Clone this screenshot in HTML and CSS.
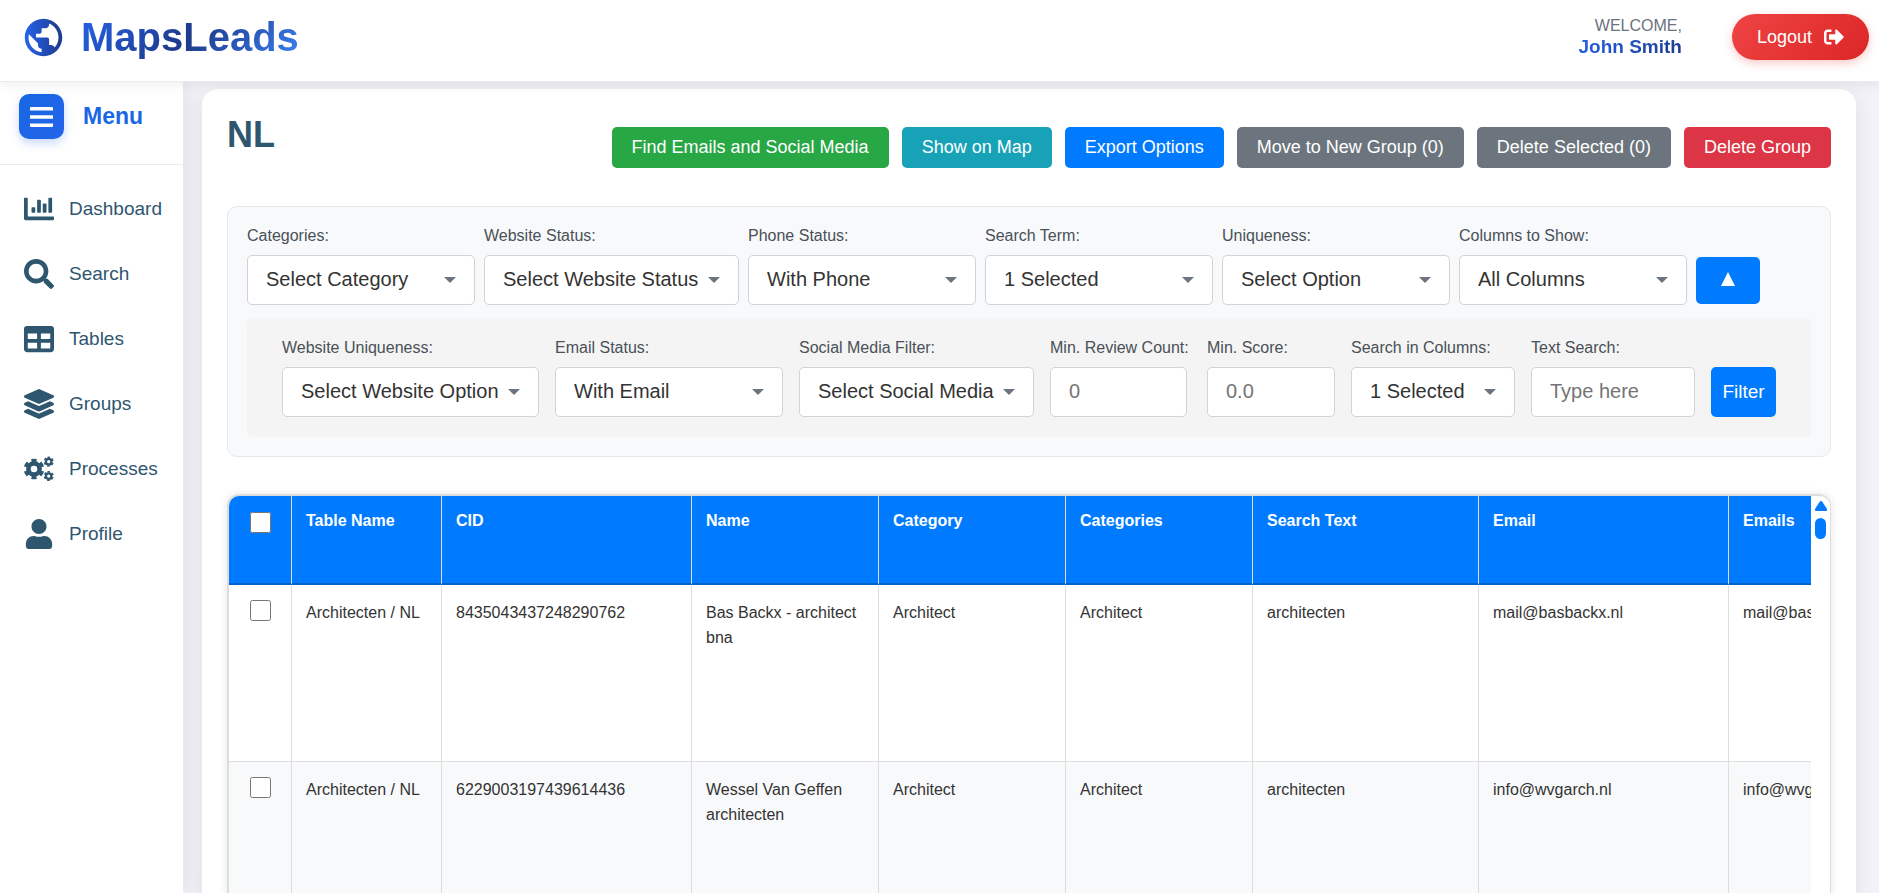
FILE: index.html
```
<!DOCTYPE html>
<html lang="en">
<head>
    <meta charset="UTF-8">
    <meta name="viewport" content="width=device-width, initial-scale=1.0">
    <title>MapsLeads</title>
    <link rel="stylesheet" href="styles.css">
</head>
<body>
    <!-- Top Bar -->
    <header class="topbar">
        <a class="brand" href="#">
            <svg class="brand-icon" viewBox="0 0 24 24" aria-hidden="true">
                <defs>
                    <linearGradient id="brandGradient" x1="0" y1="0" x2="1" y2="0">
                        <stop offset="0" stop-color="#2563eb"/>
                        <stop offset="1" stop-color="#1e3a8a"/>
                    </linearGradient>
                </defs>
                <path fill="url(#brandGradient)" d="M12 2C6.48 2 2 6.48 2 12s4.48 10 10 10 10-4.48 10-10S17.52 2 12 2zm-1 17.93c-3.95-.49-7-3.85-7-7.93 0-.62.08-1.21.21-1.79L9 15v1c0 1.1.9 2 2 2v1.93zm6.9-2.54c-.26-.81-1-1.39-1.9-1.39h-1v-3c0-.55-.45-1-1-1H8v-2h2c.55 0 1-.45 1-1V7h2c1.1 0 2-.9 2-2v-.41c2.93 1.19 5 4.06 5 7.41 0 2.08-.8 3.97-2.1 5.39z"/>
            </svg>
            <span class="brand-name">MapsLeads</span>
        </a>
        <div class="topbar-right">
            <div class="user-info">
                <span class="welcome">WELCOME,</span>
                <span class="user-name">John Smith</span>
            </div>
            <button class="logout-btn" type="button">
                <span>Logout</span>
                <svg viewBox="0 0 512 512" aria-hidden="true"><path d="M497 273L329 441c-15 15-41 4.500-41-17v-96H152c-13.300 0-24-10.700-24-24v-96c0-13.300 10.700-24 24-24h136V88c0-21.400 25.900-32 41-17l168 168c9.300 9.400 9.300 24.600 0 34zM192 436v-40c0-6.600-5.400-12-12-12H96c-17.700 0-32-14.300-32-32V160c0-17.700 14.300-32 32-32h84c6.600 0 12-5.400 12-12V76c0-6.600-5.400-12-12-12H96c-53 0-96 43-96 96v192c0 53 43 96 96 96h84c6.600 0 12-5.400 12-12z"/></svg>
            </button>
        </div>
    </header>

    <div class="layout">
        <!-- Sidebar -->
        <aside class="sidebar">
            <div class="menu-header">
                <button class="menu-btn" type="button" aria-label="Toggle menu">
                    <svg viewBox="0 0 23 20" aria-hidden="true"><path d="M1 0h21a1 1 0 0 1 1 1v2.500H0V1a1 1 0 0 1 1-1zM0 8.200h23v3.500H0zM0 16.500h23V19a1 1 0 0 1-1 1H1a1 1 0 0 1-1-1z"/></svg>
                </button>
                <span class="menu-title">Menu</span>
            </div>
            <nav class="menu">
                <a href="#">
                    <svg viewBox="0 0 512 512" aria-hidden="true"><path d="M332.800 320h38.400c6.400 0 12.800-6.400 12.800-12.800V172.800c0-6.400-6.400-12.800-12.800-12.800h-38.400c-6.400 0-12.800 6.400-12.800 12.800v134.400c0 6.400 6.400 12.800 12.800 12.800zm96 0h38.400c6.400 0 12.800-6.400 12.800-12.800V76.800c0-6.400-6.400-12.800-12.800-12.800h-38.400c-6.400 0-12.800 6.400-12.800 12.800v230.400c0 6.400 6.400 12.800 12.800 12.800zm-288 0h38.400c6.400 0 12.800-6.400 12.800-12.800v-70.400c0-6.400-6.400-12.800-12.800-12.800h-38.400c-6.400 0-12.800 6.400-12.800 12.800v70.400c0 6.400 6.400 12.800 12.800 12.800zm96 0h38.400c6.400 0 12.800-6.400 12.800-12.800V108.800c0-6.400-6.400-12.800-12.800-12.800h-38.400c-6.400 0-12.800 6.400-12.800 12.800v198.400c0 6.400 6.400 12.800 12.800 12.800zM496 384H64V80c0-8.840-7.160-16-16-16H16C7.160 64 0 71.160 0 80v336c0 17.670 14.330 32 32 32h464c8.840 0 16-7.160 16-16v-32c0-8.840-7.160-16-16-16z"/></svg>
                    Dashboard
                </a>
                <a href="#">
                    <svg viewBox="0 0 512 512" aria-hidden="true"><path d="M505 442.700L405.300 343c-4.500-4.500-10.600-7-17-7H372c27.600-35.300 44-79.700 44-128C416 93.100 322.900 0 208 0S0 93.100 0 208s93.100 208 208 208c48.300 0 92.700-16.400 128-44v16.300c0 6.400 2.500 12.500 7 17l99.700 99.700c9.400 9.400 24.600 9.400 33.900 0l28.300-28.300c9.400-9.400 9.400-24.600.1-34zM208 336c-70.700 0-128-57.200-128-128 0-70.700 57.200-128 128-128 70.700 0 128 57.200 128 128 0 70.700-57.200 128-128 128z"/></svg>
                    Search
                </a>
                <a href="#">
                    <svg viewBox="0 0 512 512" aria-hidden="true"><path d="M464 32H48C21.490 32 0 53.490 0 80v352c0 26.510 21.490 48 48 48h416c26.510 0 48-21.490 48-48V80c0-26.510-21.490-48-48-48zM224 416H64v-96h160v96zm0-160H64v-96h160v96zm224 160H288v-96h160v96zm0-160H288v-96h160v96z"/></svg>
                    Tables
                </a>
                <a href="#">
                    <svg viewBox="0 0 512 512" aria-hidden="true"><path d="M12.410 148.020l232.940 105.670c6.800 3.090 14.490 3.090 21.290 0l232.940-105.670c16.550-7.510 16.550-32.520 0-40.030L266.650 2.310a25.607 25.607 0 0 0-21.290 0L12.410 107.980c-16.550 7.510-16.550 32.530 0 40.040zm487.180 88.280l-58.090-26.330-161.640 73.270c-7.560 3.430-15.590 5.170-23.860 5.170s-16.290-1.740-23.860-5.170L70.510 209.970l-58.100 26.330c-16.550 7.500-16.550 32.500 0 40l232.940 105.590c6.800 3.080 14.490 3.080 21.290 0L499.590 276.300c16.550-7.500 16.550-32.500 0-40zm0 127.800l-57.870-26.230-161.860 73.370c-7.560 3.430-15.590 5.170-23.860 5.170s-16.290-1.740-23.860-5.170L70.290 337.870 12.410 364.100c-16.550 7.500-16.550 32.500 0 40l232.940 105.590c6.800 3.080 14.490 3.080 21.290 0L499.590 404.100c16.550-7.500 16.550-32.500 0-40z"/></svg>
                    Groups
                </a>
                <a href="#">
                    <svg viewBox="0 0 30 30" aria-hidden="true">
                        <g id="gear" fill="none" stroke="currentColor">
                            <circle cx="10" cy="15" r="5.600" stroke-width="4.600"/>
                            <circle cx="10" cy="15" r="8.700" stroke-width="3.200" pathLength="12" stroke-dasharray="1.100 0.900" transform="rotate(-106.500 10 15)"/>
                        </g>
                        <use href="#gear" transform="translate(19.800 .3) scale(.49)"/>
                        <use href="#gear" transform="translate(19.800 14.700) scale(.49)"/>
                    </svg>
                    Processes
                </a>
                <a href="#">
                    <svg viewBox="0 0 448 512" aria-hidden="true"><path d="M224 256c70.700 0 128-57.300 128-128S294.700 0 224 0 96 57.300 96 128s57.300 128 128 128zm89.600 32h-16.700c-22.200 10.200-46.900 16-72.900 16s-50.600-5.800-72.900-16h-16.700C60.200 288 0 348.200 0 422.400V464c0 26.500 21.500 48 48 48h352c26.500 0 48-21.500 48-48v-41.600c0-74.200-60.200-134.400-134.400-134.400z"/></svg>
                    Profile
                </a>
            </nav>
        </aside>

        <main class="content">
            <div class="card">
                <div class="card-header">
                    <h1>NL</h1>
                    <div class="actions">
                        <button class="btn btn-green" type="button">Find Emails and Social Media</button>
                        <button class="btn btn-teal" type="button">Show on Map</button>
                        <button class="btn btn-blue" type="button">Export Options</button>
                        <button class="btn btn-gray" type="button">Move to New Group (0)</button>
                        <button class="btn btn-gray" type="button">Delete Selected (0)</button>
                        <button class="btn btn-red" type="button">Delete Group</button>
                    </div>
                </div>

                <!-- Filters -->
                <form class="filters">
                    <div class="filter-row">
                        <div class="field">
                            <label for="categories">Categories:</label>
                            <select id="categories"><option>Select Category</option></select>
                        </div>
                        <div class="field">
                            <label for="websiteStatus">Website Status:</label>
                            <select id="websiteStatus"><option>Select Website Status</option></select>
                        </div>
                        <div class="field">
                            <label for="phoneStatus">Phone Status:</label>
                            <select id="phoneStatus"><option>With Phone</option></select>
                        </div>
                        <div class="field">
                            <label for="searchTerm">Search Term:</label>
                            <select id="searchTerm"><option>1 Selected</option></select>
                        </div>
                        <div class="field">
                            <label for="uniqueness">Uniqueness:</label>
                            <select id="uniqueness"><option>Select Option</option></select>
                        </div>
                        <div class="field">
                            <label for="columns">Columns to Show:</label>
                            <select id="columns"><option>All Columns</option></select>
                        </div>
                        <button class="toggle-btn" type="button" aria-label="Hide more filters">
                            <svg viewBox="0 0 14 14" aria-hidden="true"><path d="M7 0l7 14H0z"/></svg>
                        </button>
                    </div>

                    <div class="filter-row more-filters">
                        <div class="field">
                            <label for="websiteUniqueness">Website Uniqueness:</label>
                            <select id="websiteUniqueness"><option>Select Website Option</option></select>
                        </div>
                        <div class="field">
                            <label for="emailStatus">Email Status:</label>
                            <select id="emailStatus"><option>With Email</option></select>
                        </div>
                        <div class="field">
                            <label for="socialMedia">Social Media Filter:</label>
                            <select id="socialMedia"><option>Select Social Media</option></select>
                        </div>
                        <div class="field reviews-field">
                            <label for="minReviews">Min. Review Count:</label>
                            <input class="reviews-input" type="number" id="minReviews" placeholder="0">
                        </div>
                        <div class="field">
                            <label for="minScore">Min. Score:</label>
                            <input class="score-input" type="number" id="minScore" placeholder="0.0">
                        </div>
                        <div class="field">
                            <label for="searchColumns">Search in Columns:</label>
                            <select class="narrow" id="searchColumns"><option>1 Selected</option></select>
                        </div>
                        <div class="field">
                            <label for="textSearch">Text Search:</label>
                            <input class="narrow" type="text" id="textSearch" placeholder="Type here">
                        </div>
                        <button class="filter-btn" type="button">Filter</button>
                    </div>
                </form>

                <!-- Leads Table -->
                <div class="table-box">
                    <div class="table-scroll">
                        <table>
                            <colgroup>
                                <col class="col-check">
                                <col class="col-table">
                                <col class="col-wide">
                                <col class="col-medium">
                                <col class="col-medium">
                                <col class="col-medium">
                                <col class="col-search">
                                <col class="col-wide">
                                <col class="col-wide">
                            </colgroup>
                            <thead>
                                <tr>
                                    <th><input type="checkbox" aria-label="Select all"></th>
                                    <th>Table Name</th>
                                    <th>CID</th>
                                    <th>Name</th>
                                    <th>Category</th>
                                    <th>Categories</th>
                                    <th>Search Text</th>
                                    <th>Email</th>
                                    <th>Emails</th>
                                </tr>
                            </thead>
                            <tbody>
                                <tr>
                                    <td><input type="checkbox" aria-label="Select row"></td>
                                    <td>Architecten / NL</td>
                                    <td>8435043437248290762</td>
                                    <td>Bas Backx - architect bna</td>
                                    <td>Architect</td>
                                    <td>Architect</td>
                                    <td>architecten</td>
                                    <td>mail@basbackx.nl</td>
                                    <td>mail@basbackx.nl</td>
                                </tr>
                                <tr>
                                    <td><input type="checkbox" aria-label="Select row"></td>
                                    <td>Architecten / NL</td>
                                    <td>6229003197439614436</td>
                                    <td>Wessel Van Geffen architecten</td>
                                    <td>Architect</td>
                                    <td>Architect</td>
                                    <td>architecten</td>
                                    <td>info@wvgarch.nl</td>
                                    <td>info@wvgarch.nl</td>
                                </tr>
                            </tbody>
                        </table>
                    </div>
                    <div class="scrollbar" aria-hidden="true">
                        <svg class="scroll-arrow" viewBox="0 0 12 10"><path d="M6 0q.8 0 1.300.8L12 8q.3 2-1 2H1q-1.300 0-1-2L4.700.8Q5.200 0 6 0z"/></svg>
                        <div class="scroll-thumb"></div>
                    </div>
                </div>
            </div>
        </main>
    </div>
</body>
</html>
```

FILE: styles.css
```
* {
    box-sizing: border-box;
}

body {
    margin: 0;
    height: 100vh;
    display: flex;
    flex-direction: column;
    overflow: hidden;
    font-family: "Liberation Sans", Arial, sans-serif;
    font-size: 16px;
    color: #333;
    background-color: #f3f2f8;
}

button, input, select {
    font-family: inherit;
}

button {
    border: none;
    padding: 0;
    color: white;
    cursor: pointer;
}

svg {
    fill: currentColor;
}

/* Top Bar */
.topbar {
    display: flex;
    justify-content: space-between;
    align-items: flex-start;
    flex-shrink: 0;
    height: 82px;
    padding: 14px 10px 0 21px;
    background: #fff;
    border-bottom: 1px solid #ececf0;
    box-shadow: 0 2px 12px rgba(0, 0, 0, 0.08);
    z-index: 2;
}

.brand {
    display: flex;
    align-items: center;
    gap: 15px;
    text-decoration: none;
}

.brand-icon {
    width: 45px;
    height: 45px;
}

.brand-name {
    font-size: 40px;
    line-height: 46px;
    font-weight: bold;
    color: transparent;
    background: linear-gradient(135deg, #2563eb, #1e3a8a 50%, #3b82f6);
    background-clip: text;
}

.topbar-right {
    display: flex;
    gap: 50px;
}

.user-info {
    display: flex;
    flex-direction: column;
    align-items: flex-end;
    padding-top: 2px;
}

.welcome {
    line-height: 20px;
    color: #6b7280;
}

.user-name {
    font-size: 19px;
    line-height: 22px;
    font-weight: bold;
    color: transparent;
    background: linear-gradient(135deg, #2563eb, #1e3a8a);
    background-clip: text;
}

.logout-btn {
    display: flex;
    align-items: center;
    gap: 12px;
    height: 46px;
    padding: 0 25px;
    border-radius: 23px;
    font-size: 18px;
    background: linear-gradient(135deg, #ef4444, #dc2626);
    box-shadow: 0 3px 10px rgba(239, 68, 68, 0.3);
}

.logout-btn svg {
    width: 20px;
    height: 20px;
}

/* Layout */
.layout {
    display: flex;
    flex: 1;
    min-height: 0;
}

.sidebar {
    width: 183px;
    flex-shrink: 0;
    background: #fff;
    box-shadow: 4px 0 20px rgba(0, 0, 0, 0.08);
}

.menu-header {
    display: flex;
    align-items: center;
    gap: 19px;
    padding: 12px 19px 25px;
    border-bottom: 1px solid #e9ecef;
}

.menu-btn {
    display: flex;
    align-items: center;
    justify-content: center;
    width: 45px;
    height: 45px;
    border-radius: 10px;
    background: linear-gradient(135deg, #1668e3, #2563eb);
    box-shadow: 0 4px 10px rgba(37, 99, 235, 0.25);
}

.menu-btn svg {
    width: 23px;
    height: 20px;
}

.menu-title {
    font-size: 23px;
    font-weight: bold;
    color: #1967e5;
}

.menu {
    padding-top: 11px;
}

.menu a {
    display: flex;
    align-items: center;
    gap: 15px;
    height: 65px;
    padding-left: 24px;
    font-size: 19px;
    color: #2f566f;
    text-decoration: none;
}

.menu svg {
    width: 30px;
    height: 30px;
}

/* Main Card */
.content {
    flex: 1;
    min-width: 0;
    padding: 7px 23px 0 19px;
}

.card {
    padding: 25px;
    background: #fff;
    border-radius: 16px;
    box-shadow: 0 4px 20px rgba(0, 0, 0, 0.08);
}

.card-header {
    display: flex;
    justify-content: space-between;
    min-height: 54px;
    margin-bottom: 38px;
}

h1 {
    margin: 0;
    font-size: 36px;
    line-height: 42px;
    color: #2f566f;
}

.actions {
    display: flex;
    align-items: flex-end;
    gap: 13px;
}

.btn {
    height: 41px;
    padding: 0 20px;
    border-radius: 5px;
    font-size: 18px;
}

.btn-green {
    background-color: #28a745;
}

.btn-teal {
    background-color: #17a2b8;
}

.btn-blue {
    background-color: #007bff;
}

.btn-gray {
    background-color: #6c757d;
}

.btn-red {
    background-color: #dc3545;
}

/* Filters */
.filters {
    margin-bottom: 37px;
    padding: 19px;
    background: #f8f9fb;
    border: 1px solid #e4e9ed;
    border-radius: 10px;
}

.filter-row {
    display: flex;
    align-items: flex-end;
    gap: 9px;
}

.more-filters {
    gap: 16px;
    margin-top: 13px;
    padding: 20px 35px;
    background: #f4f4f4;
    border-radius: 5px;
}

.field {
    display: flex;
    flex-direction: column;
    align-items: flex-start;
    gap: 9px;
}

.field label {
    line-height: 20px;
    color: #495057;
}

.field select, .field input {
    height: 50px;
    padding: 0 18px 2px;
    font-size: 20px;
    color: #333;
    background-color: #fff;
    border: 1px solid #ced4da;
    border-radius: 5px;
}

.field select {
    appearance: none;
    min-width: 228px;
    padding-right: 39px;
    background-image: url("data:image/svg+xml,%3Csvg xmlns='http://www.w3.org/2000/svg' width='12' height='6'%3E%3Cpath d='M0 0h12L6 6z' fill='%236c757d'/%3E%3C/svg%3E");
    background-repeat: no-repeat;
    background-position: right 18px center;
}

.field input::placeholder {
    color: #757575;
}

.reviews-field {
    width: 141px;
    white-space: nowrap;
}

.field .reviews-input {
    width: 137px;
}

.field .score-input {
    width: 128px;
}

.field .narrow {
    width: 164px;
    min-width: 0;
}

.toggle-btn {
    width: 64px;
    height: 47px;
    margin-bottom: 1px;
    border-radius: 5px;
    background-color: #007bff;
}

.toggle-btn svg {
    width: 14px;
    height: 14px;
}

.filter-btn {
    width: 65px;
    height: 50px;
    border-radius: 5px;
    font-size: 19px;
    background-color: #007bff;
}

/* Table */
.table-box {
    display: flex;
    border: 1px solid #ddd;
    border-width: 2px 1px 1px 2px;
    border-radius: 12px;
    overflow: hidden;
    box-shadow: 0 0 8px rgba(0, 0, 0, 0.1);
}

.table-scroll {
    flex: 1;
    min-width: 0;
    overflow: hidden;
}

table {
    width: 1750px;
    table-layout: fixed;
    border-collapse: separate;
    border-spacing: 0;
}

.col-check {
    width: 63px;
}

.col-table {
    width: 150px;
}

.col-wide {
    width: 250px;
}

.col-medium {
    width: 187px;
}

.col-search {
    width: 226px;
}

th, td {
    padding: 15px 14px;
    border-right: 1px solid #ddd;
    line-height: 25px;
    text-align: left;
    vertical-align: top;
}

th {
    height: 89px;
    padding-top: 12px;
    background-color: #007bff;
    color: white;
    border-bottom: 2px solid #0062cc;
}

td {
    height: 177px;
    border-bottom: 1px solid #ddd;
}

tbody tr:nth-child(even) {
    background-color: #f8f9fb;
}

table input {
    display: block;
    width: 21px;
    height: 21px;
    margin: 0 auto;
}

th input {
    margin-top: 4px;
}

/* Scrollbar */
.scrollbar {
    display: flex;
    flex-direction: column;
    align-items: center;
    gap: 7px;
    width: 19px;
    padding: 5px 0 0;
    background: #fff;
    color: #007bff;
}

.scroll-arrow {
    width: 12px;
    height: 10px;
}

.scroll-thumb {
    width: 11px;
    height: 21px;
    border-radius: 6px;
    background-color: #007bff;
}
```
